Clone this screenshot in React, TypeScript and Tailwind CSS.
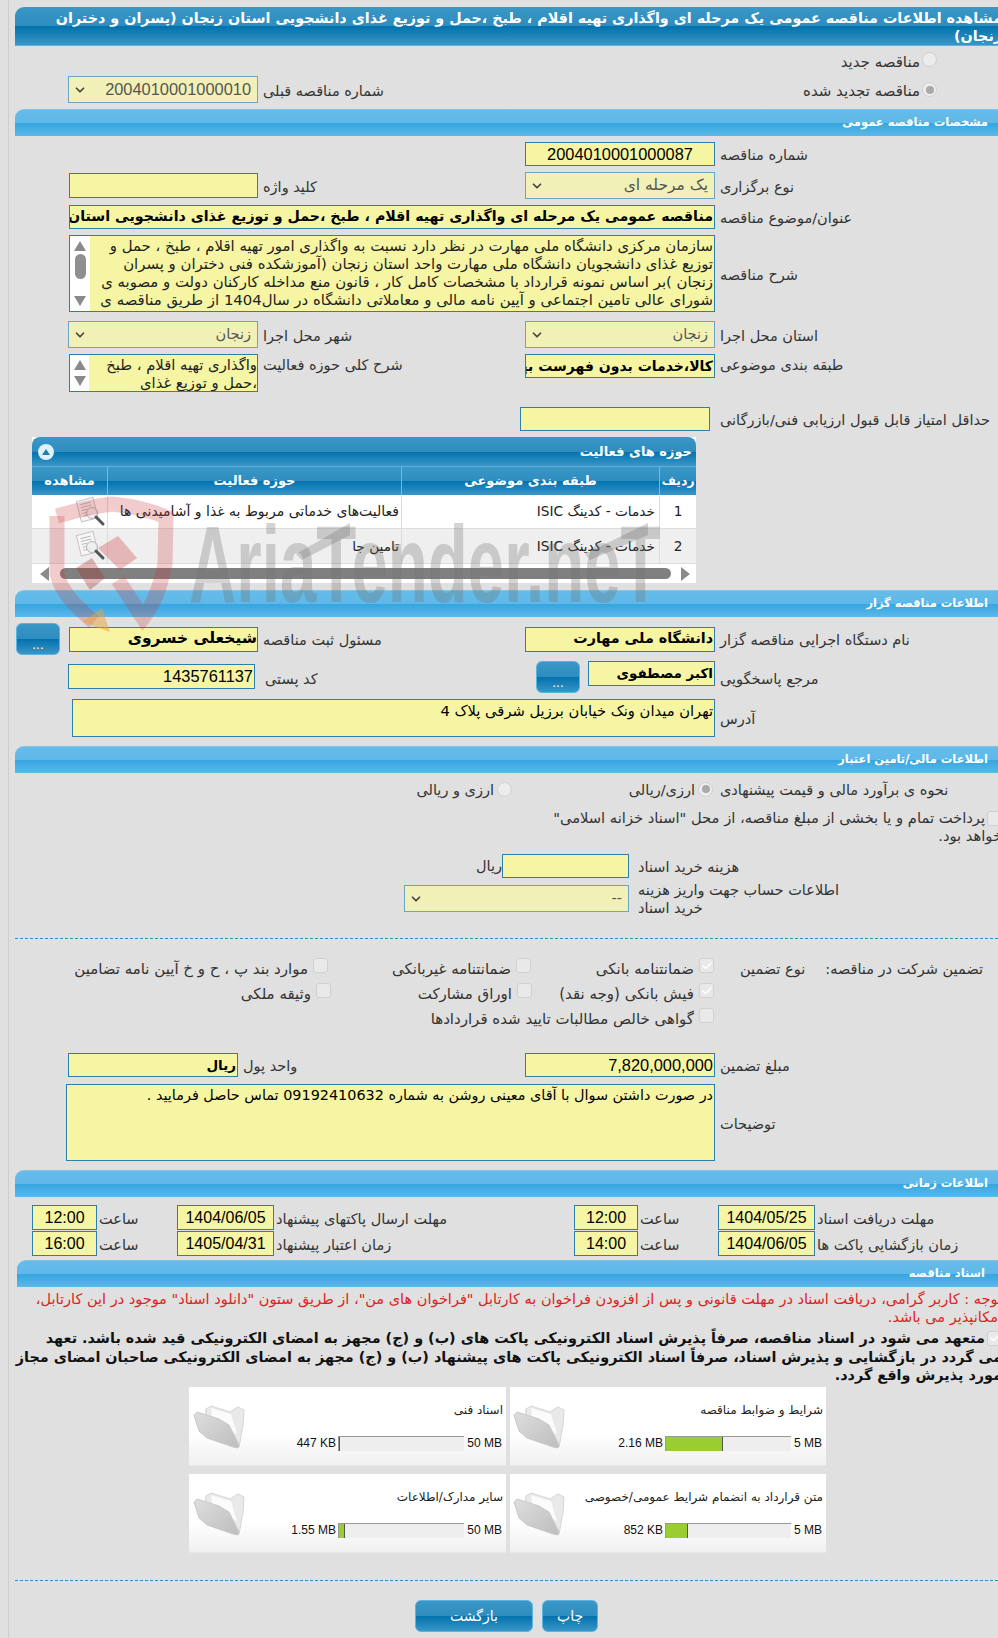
import { ChevronDown, Check } from "lucide-react";
import type { ReactNode } from "react";

const headBar = "bg-[linear-gradient(#3a97c6_0%,#2e8dbf_50%,#0272ad_51%,#3a96c7_100%)]";
const sectionBar = "bg-[linear-gradient(#65bce9_0%,#5fb8e8_50%,#36a6e0_52%,#5cb8ea_100%)]";
const numFont = "font-['Liberation_Sans',sans-serif]";

function Section({ children, className = "" }: { children: ReactNode; className?: string }) {
    return (
        <div className={`h-[27px] -mr-[10px] rounded-t-[9px] border-t border-[#7cc4ea] flex items-center text-white font-bold text-[11.5px] ${sectionBar} ${className}`}>
            {children}
        </div>
    );
}

function Lbl({ children, className = "w-[278px]" }: { children?: ReactNode; className?: string }) {
    return <div className={`shrink-0 text-left whitespace-nowrap text-[14.5px] leading-[18px] pt-[2px] text-[#333] ${className}`}>{children}</div>;
}

function Box({ children, className = "" }: { children?: ReactNode; className?: string }) {
    return (
        <div className={`shrink-0 overflow-hidden whitespace-nowrap bg-[#f6f5a3] border border-[#2b7fae] flex items-center text-black ${className}`}>
            {children}
        </div>
    );
}

function Select({ children, className = "" }: { children: ReactNode; className?: string }) {
    return (
        <div className={`shrink-0 h-[27px] bg-[#f1f0b7] border border-[#6fa3c4] flex items-center justify-between pr-[6px] pl-[4px] text-[#555] ${className}`}>
            <span className="whitespace-nowrap">{children}</span>
            <ChevronDown size={14} strokeWidth={3} className="text-[#444]" />
        </div>
    );
}

function Radio({ on = false }: { on?: boolean }) {
    return (
        <span className="shrink-0 w-[15px] h-[15px] rounded-full border border-[#cfcfcf] bg-[#ececec] flex items-center justify-center">
            {on && <span className="w-[8px] h-[8px] rounded-full bg-[#a9a9a9]" />}
        </span>
    );
}

function Tick({ on = false }: { on?: boolean }) {
    return (
        <span className="shrink-0 w-[15px] h-[15px] rounded-[3px] border border-[#d0d0d0] bg-[#e9e9e9] flex items-center justify-center">
            {on && <Check size={12} strokeWidth={3} className="text-white" />}
        </span>
    );
}

function Option({ on = false, children, className = "" }: { on?: boolean; children: ReactNode; className?: string }) {
    return (
        <div className={`shrink-0 flex items-start text-[15px] leading-[18px] whitespace-nowrap ${className}`}>
            <Tick on={on} />
            <span className="mr-[5px] mt-[2px]">{children}</span>
        </div>
    );
}

function Arrow({ dir }: { dir: "up" | "down" | "left" | "right" }) {
    const pts = { up: "0,10 6,0 12,10", down: "0,0 12,0 6,10", left: "9,0 9,14 0,7", right: "0,0 0,14 9,7" }[dir];
    const box = dir === "up" || dir === "down" ? "0 0 12 10" : "0 0 9 14";
    const cls = dir === "up" || dir === "down" ? "w-[12px] h-[10px]" : "w-[9px] h-[14px]";
    return (
        <svg viewBox={box} className={cls}>
            <polygon points={pts} fill="#8a8a8a" />
        </svg>
    );
}

function DocIcon() {
    return (
        <svg viewBox="0 0 32 30" className="w-[32px] h-[30px]">
            <g transform="rotate(-14 14 14)">
                <rect x="5" y="2" width="17" height="21" fill="#f7f7f7" stroke="#c4c4c4" />
                <path d="M8 6h11M8 9h11M8 12h6M8 15h5M8 18h8" stroke="#bdbdbd" strokeWidth="1" />
            </g>
            <circle cx="18" cy="16" r="5.5" fill="#eeeeee" fillOpacity="0.8" stroke="#b5b5b5" />
            <path d="M22 20l7 7" stroke="#555" strokeWidth="3" strokeLinecap="round" />
        </svg>
    );
}

function Folder() {
    return (
        <svg viewBox="0 0 54 48" className="w-[54px] h-[48px] shrink-0">
            <defs>
                <linearGradient id="fold" x1="0" y1="0" x2="1" y2="1">
                    <stop offset="0" stopColor="#dedede" />
                    <stop offset="1" stopColor="#bdbdbd" />
                </linearGradient>
            </defs>
            <path d="M13 8 L18 5 L37 11 L45 6 L51 9 L50 24 L46 46 L36 30 L12 20 Z" fill="#e9e9e9" stroke="#d5d5d5" />
            <path d="M18 7 L38 13 L44 33 L20 22 Z" fill="#fbfbfb" />
            <path d="M1 14 L4 11 L26 18 L36 24 L46 44 L45 47 L40 46 L14 37 L6 30 Z" fill="url(#fold)" stroke="#c9c9c9" />
        </svg>
    );
}

function FileCard({ title, size, max, fill, big = false }: { title: string; size: string; max: string; fill: string; big?: boolean }) {
    return (
        <div className="h-[79px] flex bg-[linear-gradient(#ffffff_60%,#f0f0f0_100%)] border-b border-[#e8e8e8]">
            <div className="w-[259px] shrink-0 pt-[15px]">
                <div className="text-[12px] leading-[16px] text-[#222] pr-[3px] whitespace-nowrap">{title}</div>
                <div className={`flex items-center mt-[16px] text-[12px] text-[#111] ${numFont}`}>
                    <span dir="ltr" className={`shrink-0 text-right pr-[4px] whitespace-nowrap ${big ? "w-[42px]" : "w-[35px]"}`}>{max}</span>
                    <div dir="ltr" className="shrink-0 w-[126px] h-[15px] bg-[#eeeeee] border-t border-l border-[#999] flex">
                        <div className={`h-full bg-[#9acd32] border-r border-[#555] ${fill}`} />
                    </div>
                    <span dir="ltr" className="pr-[2px] whitespace-nowrap">{size}</span>
                </div>
            </div>
            <div className="flex-1 flex items-start justify-start pt-[14px]">
                <Folder />
            </div>
        </div>
    );
}

function BlueButton({ children, className = "" }: { children: ReactNode; className?: string }) {
    return (
        <div className={`shrink-0 rounded-[6px] border border-[#5ab4e2] text-white flex ${headBar} ${className}`}>
            {children}
        </div>
    );
}

function TimeCell({ children, className = "" }: { children: ReactNode; className?: string }) {
    return <Box className={`h-[25px] justify-center text-[16px] ${numFont} ${className}`}>{children}</Box>;
}

export default function App() {
    return (
        <div dir="rtl" className="relative w-[998px] h-[1638px] overflow-hidden bg-[#e0e0e0] font-['DejaVu_Sans',sans-serif] text-[#333]">
            <div className="ml-[8px] w-[990px] h-full border-l border-[#cdcdcd] pl-[6px] pt-[7px]">
                {/* title */}
                <div className={`h-[39px] -mr-[10px] rounded-t-[9px] border-b border-[#63aedb] text-white font-bold text-[14.3px] leading-[18px] pt-[2px] pr-[6px] whitespace-nowrap ${headBar}`}>
                    مشاهده اطلاعات مناقصه عمومی یک مرحله ای واگذاری تهیه اقلام ، طبخ ،حمل و توزیع غذای دانشجویی استان زنجان (پسران و دختران
                    <br />
                    زنجان)
                </div>

                <div className="h-[15px] mt-[6px] flex items-center pr-[61px]">
                    <Radio />
                    <span className="text-[15px] mr-[2px] mt-[6px]">مناقصه جدید</span>
                </div>
                <div className="h-[27px] mt-[9px] flex items-center">
                    <div className="w-[483px] shrink-0 flex items-center pr-[61px]">
                        <Radio on />
                        <span className="text-[15px] mr-[2px] mt-[4px]">مناقصه تجدید شده</span>
                    </div>
                    <Lbl className="w-[257px] pl-[5px]">شماره مناقصه قبلی</Lbl>
                    <Select className={`w-[190px] ${numFont} text-[16.4px]`}>2004010001000010</Select>
                </div>

                <Section className="mt-[6px] pr-[20px]">
                    <span className="-mt-[1px]">مشخصات مناقصه عمومی</span>
                </Section>

                <div className="h-[24px] mt-[6px] flex items-center">
                    <Lbl>شماره مناقصه</Lbl>
                    <Box className={`mr-[5px] w-[190px] h-[24px] justify-center text-[16.4px] ${numFont}`}>2004010001000087</Box>
                </div>
                <div className="h-[27px] mt-[6px] flex items-center">
                    <Lbl>نوع برگزاری</Lbl>
                    <Select className="mr-[5px] w-[190px] text-[15.5px]">یک مرحله ای</Select>
                    <Lbl className="w-[267px] pl-[5px]">کلید واژه</Lbl>
                    <Box className="w-[189px] h-[25px]" />
                </div>
                <div className="h-[24px] mt-[6px] flex items-center">
                    <Lbl>عنوان/موضوع مناقصه</Lbl>
                    <Box className="mr-[5px] w-[646px] h-[24px] font-bold text-[14.2px] pr-[1px]">
                        مناقصه عمومی یک مرحله ای واگذاری تهیه اقلام ، طبخ ،حمل و توزیع غذای دانشجویی استان زنجان (پسران و دختران زنجان)
                    </Box>
                </div>
                <div className="h-[77px] mt-[6px] flex items-center">
                    <Lbl>شرح مناقصه</Lbl>
                    <Box className="mr-[5px] w-[646px] h-[77px] items-stretch">
                        <div className="flex-1 overflow-hidden text-[14.9px] leading-[18px] pr-[1px] pt-[1px] whitespace-nowrap text-[#222]">
                            سازمان مرکزی دانشگاه ملی مهارت در نظر دارد نسبت به واگذاری امور تهیه اقلام ، طبخ ، حمل و
                            <br />
                            توزیع غذای دانشجویان دانشگاه ملی مهارت واحد استان زنجان (آموزشکده فنی دختران و پسران
                            <br />
                            زنجان )بر اساس نمونه قرارداد با مشخصات کامل کار ، قانون منع مداخله کارکنان دولت و مصوبه ی
                            <br />
                            شورای عالی تامین اجتماعی و آیین نامه مالی و معاملاتی دانشگاه در سال1404 از طریق مناقصه ی
                        </div>
                        <div className="w-[20px] shrink-0 bg-white flex flex-col items-center justify-between py-[5px]">
                            <Arrow dir="up" />
                            <div className="w-[11px] h-[25px] rounded-full bg-[#8f8f8f] -mt-[2px]" />
                            <div className="h-[8px]" />
                            <Arrow dir="down" />
                        </div>
                    </Box>
                </div>
                <div className="h-[27px] mt-[9px] flex items-center">
                    <Lbl>استان محل اجرا</Lbl>
                    <Select className="mr-[5px] w-[190px] text-[14.5px]">زنجان</Select>
                    <Lbl className="w-[267px] pl-[5px]">شهر محل اجرا</Lbl>
                    <Select className="w-[190px] text-[14.5px]">زنجان</Select>
                </div>
                <div className="h-[38px] mt-[6px] flex items-start">
                    <Lbl>طبقه بندی موضوعی</Lbl>
                    <Box className="mr-[5px] w-[190px] h-[24px] font-bold text-[14px] pr-[1px]">کالا،خدمات بدون فهرست بها</Box>
                    <Lbl className="w-[267px] pl-[5px]">شرح کلی حوزه فعالیت</Lbl>
                    <Box className="w-[189px] h-[38px] items-stretch">
                        <div className="flex-1 overflow-hidden text-[14.8px] leading-[18px] pt-[1px] text-[#222] whitespace-nowrap">
                            واگذاری تهیه اقلام ، طبخ
                            <br />
                            ،حمل و توزیع غذای
                        </div>
                        <div className="w-[19px] shrink-0 bg-white flex flex-col items-center justify-between py-[5px]">
                            <Arrow dir="up" />
                            <Arrow dir="down" />
                        </div>
                    </Box>
                </div>
                <div className="h-[24px] mt-[15px] flex items-center">
                    <Lbl>حداقل امتیاز قابل قبول ارزیابی فنی/بازرگانی</Lbl>
                    <Box className="mr-[10px] w-[190px] h-[24px]" />
                </div>

                {/* activity grid */}
                <div className="w-[664px] h-[146px] mt-[6px] mr-[302px] bg-white">
                    <div className={`h-[29px] rounded-t-[8px] flex items-center justify-between pr-[4px] pl-[6px] text-white font-bold text-[13px] ${headBar}`}>
                        <span>حوزه های فعالیت</span>
                        <span className="w-[16px] h-[16px] rounded-full bg-[#dff0fa] flex items-center justify-center">
                            <svg viewBox="0 0 8 6" className="w-[8px] h-[6px]">
                                <polygon points="0,6 4,0 8,6" fill="#1b7fb5" />
                            </svg>
                        </span>
                    </div>
                    <div className={`h-[29px] grid grid-cols-[36px_258px_294px_76px] text-white font-bold text-[13px] border-t border-[#63aedb] ${headBar}`}>
                        <div className="flex items-center justify-center text-[12.5px]">ردیف</div>
                        <div className="flex items-center justify-center border-r border-[#77b8dc]">طبقه بندی موضوعی</div>
                        <div className="flex items-center justify-center border-r border-[#77b8dc]">حوزه فعالیت</div>
                        <div className="flex items-center justify-center border-r border-[#77b8dc]">مشاهده</div>
                    </div>
                    <div className="h-[34px] grid grid-cols-[36px_258px_294px_76px] text-[13.7px] text-[#222] border-b border-[#dcdcdc]">
                        <div className="flex items-center justify-center">1</div>
                        <div className="flex items-center pr-[4px] border-r border-[#dcdcdc]">خدمات - کدینگ ISIC</div>
                        <div className="flex items-center pr-[2px] border-r border-[#dcdcdc] whitespace-nowrap overflow-hidden text-[14px]">فعالیت‌های خدماتی مربوط به غذا و آشامیدنی ها</div>
                        <div className="flex items-center pr-[1px] border-r border-[#dcdcdc]"><DocIcon /></div>
                    </div>
                    <div className="h-[35px] grid grid-cols-[36px_258px_294px_76px] text-[13.7px] text-[#222] bg-[#efefef] border-b border-[#dcdcdc]">
                        <div className="flex items-center justify-center">2</div>
                        <div className="flex items-center pr-[4px] border-r border-[#dcdcdc]">خدمات - کدینگ ISIC</div>
                        <div className="flex items-center pr-[2px] border-r border-[#dcdcdc]">تامین جا</div>
                        <div className="flex items-center pr-[1px] border-r border-[#dcdcdc]"><DocIcon /></div>
                    </div>
                    <div className="h-[19px] flex items-center justify-between pr-[6px] pl-[8px]">
                        <Arrow dir="right" />
                        <div className="w-[611px] h-[11px] rounded-full bg-[#808080]" />
                        <Arrow dir="left" />
                    </div>
                </div>

                <Section className="mt-[7px] pr-[20px]">اطلاعات مناقصه گزار</Section>

                <div className="h-[32px] mt-[6px] flex items-center">
                    <Lbl>نام دستگاه اجرایی مناقصه گزار</Lbl>
                    <Box className="mr-[5px] w-[190px] h-[25px] font-bold text-[14.3px] pr-[1px]">دانشگاه ملی مهارت</Box>
                    <Lbl className="w-[267px] pl-[5px]">مسئول ثبت مناقصه</Lbl>
                    <Box className="w-[189px] h-[25px] font-bold text-[15.5px]">شیخعلی خسروی</Box>
                    <BlueButton className="mr-[9px] w-[44px] h-[32px] items-end justify-center pb-[3px] text-[12px] leading-none">...</BlueButton>
                </div>
                <div className="h-[32px] mt-[6px] flex items-start">
                    <Lbl className="w-[278px] mt-[7px]">مرجع پاسخگویی</Lbl>
                    <Box className="mr-[5px] w-[127px] h-[25px] font-bold text-[13.5px] pr-[1px]">اکبر مصطفوی</Box>
                    <BlueButton className="mr-[8px] w-[44px] h-[32px] items-end justify-center pb-[3px] text-[12px] leading-none">...</BlueButton>
                    <Lbl className="w-[281px] pl-[10px] mt-[7px]">کد پستی</Lbl>
                    <Box className={`mt-[3px] w-[187px] h-[25px] text-[16.4px] pr-[1px] justify-end ${numFont}`}>
                        <span className="w-full text-right" dir="ltr">1435761137</span>
                    </Box>
                </div>
                <div className="h-[38px] mt-[6px] flex items-center">
                    <Lbl>آدرس</Lbl>
                    <Box className="mr-[5px] w-[643px] h-[38px] items-start text-[14.7px] leading-[18px] pr-[1px] pt-[2px] text-[#222]">تهران میدان ونک خیابان برزیل شرقی پلاک 4</Box>
                </div>

                <Section className="mt-[9px] pr-[20px]">اطلاعات مالی/تامین اعتبار</Section>

                <div className="h-[18px] mt-[7px] flex items-center">
                    <Lbl>نحوه ی برآورد مالی و قیمت پیشنهادی</Lbl>
                    <div className="mr-[7px] w-[201px] shrink-0 flex items-center">
                        <Radio on />
                        <span className="text-[14.5px] mr-[3px] mt-[3px]">ارزی/ریالی</span>
                    </div>
                    <Radio />
                    <span className="text-[14.5px] mr-[3px] mt-[3px]">ارزی و ریالی</span>
                </div>
                <div className="mt-[11px] h-[36px] -mr-[4px] text-[14.7px] leading-[18px] whitespace-nowrap">
                    <div className="flex items-center h-[18px]">
                        <Tick />
                        <span className="mr-[2px]">پرداخت تمام و یا بخشی از مبلغ مناقصه، از محل "اسناد خزانه اسلامی"</span>
                    </div>
                    <div>خواهد بود.</div>
                </div>
                <div className="h-[24px] mt-[9px] flex items-center">
                    <div className="w-[245px] shrink-0" />
                    <Lbl className="w-[124px] pl-[9px]">هزینه خرید اسناد</Lbl>
                    <Box className="w-[127px] h-[24px]" />
                    <span className="text-[14.5px] mt-[2px]">ریال</span>
                </div>
                <div className="h-[27px] mt-[7px] flex items-center">
                    <div className="w-[157px] shrink-0" />
                    <div className="w-[212px] shrink-0 text-[14.5px] leading-[18px] text-left pl-[9px] whitespace-nowrap">
                        اطلاعات حساب جهت واریز هزینه
                        <div className="text-left">خرید اسناد</div>
                    </div>
                    <Select className="w-[225px] text-[14.5px] h-[27px]">--</Select>
                </div>

                <div className="mt-[26px] border-t border-dashed border-[#2f8fc0] -mr-[10px]" />

                <div className="h-[18px] mt-[19px] flex items-start">
                    <div className="w-[278px] shrink-0 flex justify-between pr-[15px] pl-[20px] text-[14.5px] leading-[18px] mt-[2px] whitespace-nowrap">
                        <span>تضمین شرکت در مناقصه:</span>
                        <span>نوع تضمین</span>
                    </div>
                    <Option on className="mr-[6px] w-[183px]">ضمانتنامه بانکی</Option>
                    <Option className="w-[203px]">ضمانتنامه غیربانکی</Option>
                    <Option>موارد بند پ ، ح و خ آیین نامه تضامین</Option>
                </div>
                <div className="h-[18px] mt-[7px] flex items-start">
                    <div className="w-[278px] shrink-0" />
                    <Option on className="mr-[6px] w-[182px]">فیش بانکی (وجه نقد)</Option>
                    <Option className="w-[201px]">اوراق مشارکت</Option>
                    <Option>وثیقه ملکی</Option>
                </div>
                <div className="h-[18px] mt-[7px] flex items-start">
                    <div className="w-[278px] shrink-0" />
                    <Option className="mr-[6px]">گواهی خالص مطالبات تایید شده قراردادها</Option>
                </div>

                <div className="h-[24px] mt-[27px] flex items-center">
                    <Lbl>مبلغ تضمین</Lbl>
                    <Box className={`mr-[5px] w-[190px] h-[24px] text-[16.4px] pr-[1px] ${numFont}`}>
                        <span className="w-full text-right" dir="ltr">7,820,000,000</span>
                    </Box>
                    <Lbl className="w-[287px] pl-[5px]">واحد پول</Lbl>
                    <Box className="w-[170px] h-[24px] font-bold text-[13.5px] pr-[1px]">ریال</Box>
                </div>
                <div className="h-[77px] mt-[7px] flex items-center">
                    <Lbl>توضیحات</Lbl>
                    <Box className="mr-[5px] w-[649px] h-[77px] items-start text-[14.4px] leading-[18px] pr-[1px] pt-[1px] text-[#222]">
                        در صورت داشتن سوال با آقای معینی روشن به شماره 09192410632 تماس حاصل فرمایید .
                    </Box>
                </div>

                <Section className="mt-[9px] pr-[20px]">اطلاعات زمانی</Section>

                {[
                    { a: "مهلت دریافت اسناد", d1: "1404/05/25", t1: "12:00", b: "مهلت ارسال پاکتهای پیشنهاد", d2: "1404/06/05", t2: "12:00" },
                    { a: "زمان بازگشایی پاکت ها", d1: "1404/06/05", t1: "14:00", b: "زمان اعتبار پیشنهاد", d2: "1405/04/31", t2: "16:00" },
                ].map((r, i) => (
                    <div key={i} className={`h-[25px] flex items-center ${i === 0 ? "mt-[8px]" : "mt-[1px]"}`}>
                        <Lbl className="w-[183px] pl-[2px]">{r.a}</Lbl>
                        <TimeCell className="w-[97px]">{r.d1}</TimeCell>
                        <Lbl className="w-[80px] pl-[2px]">ساعت</Lbl>
                        <TimeCell className="w-[64px]">{r.t1}</TimeCell>
                        <Lbl className="w-[300px] pl-[2px]">{r.b}</Lbl>
                        <TimeCell className="w-[97px]">{r.d2}</TimeCell>
                        <Lbl className="w-[80px] pl-[2px]">ساعت</Lbl>
                        <TimeCell className="w-[65px]">{r.t2}</TimeCell>
                    </div>
                ))}

                <Section className="mt-[4px] ml-[2px] pr-[23px]">اسناد مناقصه</Section>

                <div className="mt-[3px] h-[36px] -mr-[4px] text-[14.5px] leading-[18px] text-[#e0201b] whitespace-nowrap">
                    توجه : کاربر گرامی، دریافت اسناد در مهلت قانونی و پس از افزودن فراخوان به کارتابل "فراخوان های من"، از طریق ستون "دانلود اسناد" موجود در این کارتابل،
                    <br />
                    امکانپذیر می باشد.
                </div>
                <div className="mt-[3px] h-[56px] -mr-[4px] text-[14.4px] font-bold leading-[18.5px] text-[#111] whitespace-nowrap">
                    <div className="flex items-center h-[18.5px]">
                        <Tick on />
                        <span className="mr-[2px]">متعهد می شود در اسناد مناقصه، صرفاً پذیرش اسناد الکترونیکی پاکت های (ب) و (ج) مجهز به امضای الکترونیکی قید شده باشد. تعهد</span>
                    </div>
                    می گردد در بازگشایی و پذیرش اسناد، صرفاً اسناد الکترونیکی پاکت های پیشنهاد (ب) و (ج) مجهز به امضای الکترونیکی صاحبان امضای مجاز
                    <br />
                    مورد پذیرش واقع گردد.
                </div>

                <div className="mt-[2px] mr-[172px] grid grid-cols-[316px_317px] gap-x-[4px] gap-y-[8px] w-[637px]">
                    <FileCard title="شرایط و ضوابط مناقصه" size="2.16 MB" max="5 MB" fill="w-[57px]" />
                    <FileCard title="اسناد فنی" size="447 KB" max="50 MB" fill="w-[1px]" big />
                    <FileCard title="متن قرارداد به انضمام شرایط عمومی/خصوصی" size="852 KB" max="5 MB" fill="w-[22px]" />
                    <FileCard title="سایر مدارک/اطلاعات" size="1.55 MB" max="50 MB" fill="w-[6px]" big />
                </div>

                <div className="mt-[27px] border-t border-dashed border-[#2f8fc0] -mr-[10px]" />

                <div className="mt-[19px] flex mr-[400px] gap-x-[9px]">
                    <BlueButton className="w-[56px] h-[32px] items-center justify-center text-[14px]">چاپ</BlueButton>
                    <BlueButton className="w-[118px] h-[32px] items-center justify-center text-[14px]">بازگشت</BlueButton>
                </div>
            </div>

            {/* watermark over the page */}
            <svg viewBox="0 0 130 140" className="absolute left-[48px] top-[496px] w-[130px] h-[140px] pointer-events-none">
                <path d="M9 20 C30 14 48 10 64 8 C84 10 102 14 118 21 L117 68 C112 92 106 108 95 122 L70 84" fill="none" stroke="#c33" strokeOpacity="0.25" strokeWidth="15" />
                <path d="M9 20 L9 78 C14 98 30 112 46 126" fill="none" stroke="#c33" strokeOpacity="0.25" strokeWidth="15" />
                <polygon points="28,72 44,62 57,82 42,94" fill="#a33" fillOpacity="0.35" />
                <polygon points="50,52 70,40 89,62 72,74" fill="#c33" fillOpacity="0.3" />
                <polygon points="34,126 62,136 54,112" fill="#e8a23a" fillOpacity="0.5" />
            </svg>
            <div dir="ltr" className="absolute left-[189px] top-[509px] w-[780px] h-[110px] origin-top-left scale-x-[0.595] text-[110px] leading-[110px] font-bold text-[#6f6f6f]/30 font-['Liberation_Sans',sans-serif] whitespace-nowrap pointer-events-none">
                AriaTender.neT
            </div>
            <svg viewBox="0 0 480 40" className="absolute left-[190px] top-[520px] w-[480px] h-[40px] pointer-events-none">
                <polygon points="106,34 160,3 160,15 112,40" fill="#6f6f6f" fillOpacity="0.3" />
                <polygon points="395,34 458,3 458,15 400,40" fill="#6f6f6f" fillOpacity="0.3" />
            </svg>
        </div>
    );
}
